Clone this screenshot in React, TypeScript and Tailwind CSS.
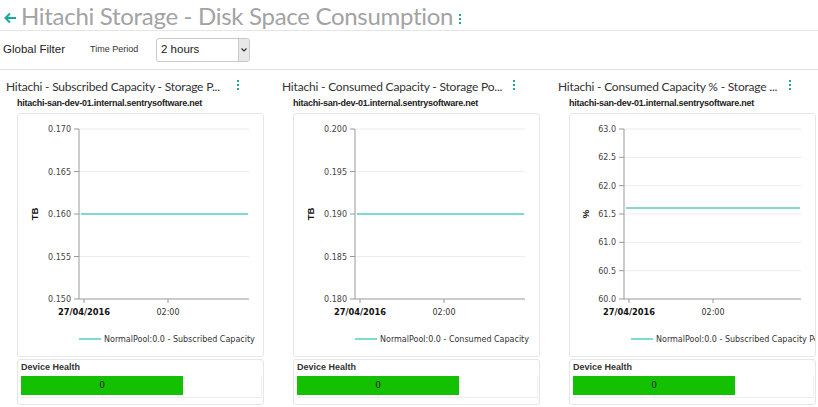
import { ReactNode } from 'react'

const TEAL = '#56cfc4'

function Kebab({ className = '' }: { className?: string }) {
  return (
    <span className={`inline-flex flex-col gap-[2px] ${className}`}>
      <span className="w-[2px] h-[2px] bg-[#1aa89a]" />
      <span className="w-[2px] h-[2px] bg-[#1aa89a]" />
      <span className="w-[2px] h-[2px] bg-[#1aa89a]" />
    </span>
  )
}

interface ChartProps {
  ticks: string[]
  axisX: number
  valueY: number
  unit: string
  unitX: number
  legend: string
}

/** line chart drawn inside the card (coords relative to the card) */
function LineChart({ ticks, axisX, valueY, unit, unitX, legend }: ChartProps) {
  const top = 15
  const bottom = 185
  const right = 231
  const step = (bottom - top) / (ticks.length - 1)
  const t1 = axisX + 5
  const t2 = axisX + 89
  return (
    <svg width="247" height="244" className="block" style={{ fontFamily: '"DejaVu Sans", Verdana, sans-serif' }}>
      {ticks.map((t, i) => {
        const y = top + i * step
        return (
          <g key={t}>
            {i < ticks.length - 1 && <line x1={axisX} x2={right} y1={y} y2={y} stroke="#ececec" strokeWidth="1" />}
            <line x1={axisX - 5} x2={axisX} y1={y} y2={y} stroke="#999" strokeWidth="1" />
            <text x={axisX - 8} y={y + 3} fontSize="8" textAnchor="end" fill="#444">
              {t}
            </text>
          </g>
        )
      })}
      <line x1={axisX} x2={axisX} y1={top} y2={bottom} stroke="#999" strokeWidth="1" />
      <line x1={axisX} x2={right} y1={bottom} y2={bottom} stroke="#999" strokeWidth="1" />
      <line x1={t1} x2={t1} y1={bottom} y2={bottom + 4} stroke="#999" strokeWidth="1" />
      <line x1={t2} x2={t2} y1={bottom} y2={bottom + 4} stroke="#999" strokeWidth="1" />
      <text x={t1} y={201} fontSize="8.3" fontWeight="bold" textAnchor="middle" fill="#111">
        27/04/2016
      </text>
      <text x={t2} y={201} fontSize="8" textAnchor="middle" fill="#333">
        02:00
      </text>
      <text
        x={unitX}
        y={100}
        fontSize="9.5"
        fontWeight="bold"
        textAnchor="middle"
        fill="#111"
        transform={`rotate(-90 ${unitX} ${100})`}
        style={{ fontFamily: '"Liberation Sans", Arial, sans-serif' }}
      >
        {unit}
      </text>
      <line x1={axisX + 2} x2={right - 1} y1={valueY} y2={valueY} stroke={TEAL} strokeWidth="1.5" />
      <line x1={61} x2={83} y1={225} y2={225} stroke={TEAL} strokeWidth="1.5" />
      <text x={86} y={228} fontSize="8" fill="#333">
        {legend}
      </text>
    </svg>
  )
}

function Panel({ title, chart }: { title: string; chart: ReactNode }) {
  return (
    <div className="w-[276px] shrink-0 pt-[8px]">
      <div className="flex items-center pl-[6px] h-[18px]">
        <span
          className="w-[231px] text-[12px] tracking-[-0.2px] text-[#333] whitespace-nowrap"
          style={{ fontFamily: 'Lato, "Open Sans", sans-serif' }}
        >
          {title}
        </span>
        <Kebab className="-mt-[4px]" />
      </div>
      <div className="pl-[17px] h-[13px] leading-[13px] text-[9px] font-bold text-[#222] whitespace-nowrap mt-[1px] tracking-[-0.25px]">
        hitachi-san-dev-01.internal.sentrysoftware.net
      </div>
      <div className="ml-[17px] mt-[3px] w-[247px] h-[244px] border border-[#e6e6e6] rounded-[3px] overflow-hidden">{chart}</div>
      <div className="ml-[17px] mt-[2px] w-[247px] h-[46px] border border-[#e6e6e6] rounded-[3px] pl-[3px] pt-[1px]">
        <div className="text-[9px] font-bold text-[#333] leading-[12px]">Device Health</div>
        <div className="relative mt-[3px] h-[23px] w-[241px]">
          <div className="absolute left-[81px] top-0 h-[23px] w-px bg-[#f0f0f0]" />
          <div className="absolute right-0 top-0 h-[23px] w-px bg-[#f0f0f0]" />
          <div className="absolute left-0 right-0 bottom-[1px] h-px bg-[#eeeeee]" />
          <div
            className="relative mt-[1px] w-[162px] h-[19px] bg-[#14c100] flex items-center justify-center text-[9px] text-[#222]"
            style={{ fontFamily: '"DejaVu Sans", Verdana, sans-serif' }}
          >
            0
          </div>
        </div>
      </div>
    </div>
  )
}

export default function App() {
  return (
    <div className="w-[818px] h-[407px] overflow-hidden bg-white text-[#333]" style={{ fontFamily: '"Liberation Sans", Arial, sans-serif' }}>
      <div className="h-[31px] border-b border-[#e5e5e5] flex items-center pl-[3px]">
        <svg width="14" height="12" viewBox="0 0 14 12" className="mt-[5px]">
          <path d="M13 6H3M7 1.5L2.5 6 7 10.5" fill="none" stroke="#1aa89a" strokeWidth="2" />
        </svg>
        <span
          className="ml-[4px] text-[24px] tracking-[-0.3px] leading-[31px] text-[#a3a3a3] whitespace-nowrap"
          style={{ fontFamily: 'Lato, "Open Sans", sans-serif' }}
        >
          Hitachi Storage - Disk Space Consumption
        </span>
        <Kebab className="ml-[6px] mt-[8px]" />
      </div>
      <div className="h-[39px] border-b border-[#e0e0e0] flex items-center pl-[3px]">
        <span className="text-[11.5px] text-[#222] w-[87px]">Global Filter</span>
        <span className="text-[9px] text-[#333] w-[66px]">Time Period</span>
        <div className="w-[94px] h-[24px] border border-[#c8c8c8] rounded-[3px] flex items-center justify-between pl-[4px]">
          <span className="text-[11.5px] text-[#222]">2 hours</span>
          <span className="w-[11px] h-[22px] bg-[#e8e8e8] border-l border-[#c8c8c8] flex items-center justify-center rounded-r-[2px]">
            <svg width="6" height="4" viewBox="0 0 6 4">
              <path d="M0.5 0.5L3 3 5.5 0.5" fill="none" stroke="#333" strokeWidth="1.2" />
            </svg>
          </span>
        </div>
      </div>
      <div className="flex">
        <Panel
          title="Hitachi - Subscribed Capacity - Storage P..."
          chart={
            <LineChart
              ticks={['0.170', '0.165', '0.160', '0.155', '0.150']}
              axisX={61}
              valueY={100}
              unit="TB"
              unitX={20}
              legend="NormalPool:0.0 - Subscribed Capacity"
            />
          }
        />
        <Panel
          title="Hitachi - Consumed Capacity - Storage Po..."
          chart={
            <LineChart
              ticks={['0.200', '0.195', '0.190', '0.185', '0.180']}
              axisX={61}
              valueY={100}
              unit="TB"
              unitX={20}
              legend="NormalPool:0.0 - Consumed Capacity"
            />
          }
        />
        <Panel
          title="Hitachi - Consumed Capacity % - Storage ..."
          chart={
            <LineChart
              ticks={['63.0', '62.5', '62.0', '61.5', '61.0', '60.5', '60.0']}
              axisX={54}
              valueY={94}
              unit="%"
              unitX={19}
              legend="NormalPool:0.0 - Subscribed Capacity Percent"
            />
          }
        />
      </div>
    </div>
  )
}
